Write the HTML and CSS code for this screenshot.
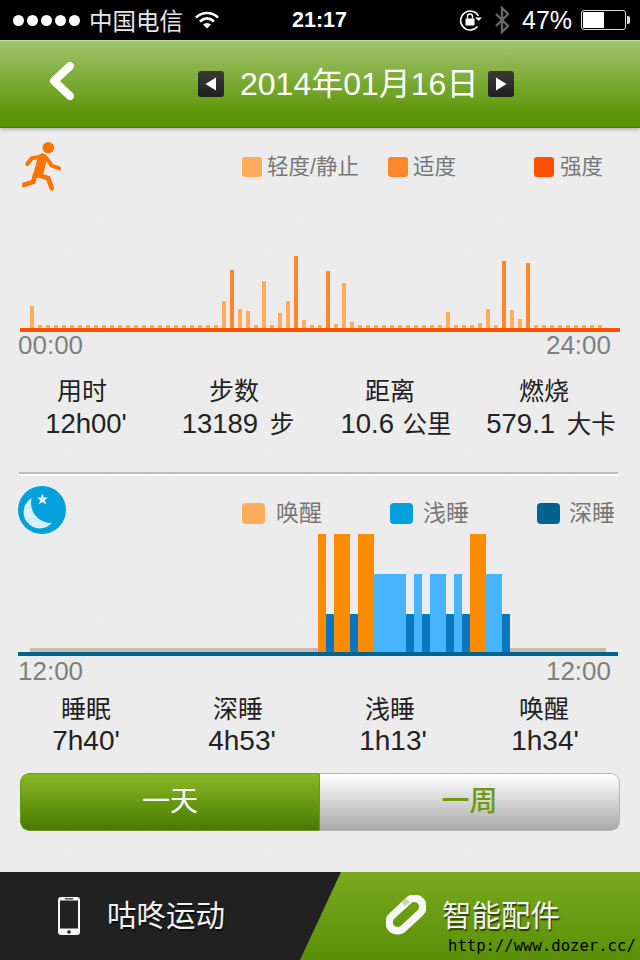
FILE: index.html
```html
<!DOCTYPE html>
<html lang="zh">
<head>
<meta charset="utf-8">
<title>咕咚运动</title>
<link rel="stylesheet" href="styles.css">
</head>
<body>
<div class="phone">
  <div class="status">
    <div class="dots"><i></i><i></i><i></i><i></i><i></i></div>
    <span class="carrier">中国电信</span>
    <svg class="wifi" viewBox="0 0 24 18"><path d="M1 6.5C7.5 .5 16.5 .5 23 6.5" fill="none" stroke="#fff" stroke-width="2.6"/><path d="M5 10.5C9.5 6.5 14.5 6.5 19 10.5" fill="none" stroke="#fff" stroke-width="2.6"/><path d="M12 17.5L8 13.5C10.5 11.5 13.5 11.5 16 13.5Z" fill="#fff"/></svg>
    <span class="clock">21:17</span>
    <svg class="lock" viewBox="0 0 24 22"><path d="M18.5 17.5A9.5 9.5 0 1 1 19.5 7" fill="none" stroke="#fff" stroke-width="1.5"/><path d="M16 8.5h7l-3.5 3.5z" fill="#fff"/><rect x="6.5" y="9.5" width="9" height="7" rx="1" fill="#fff"/><path d="M8.5 9.5V7.5a2.5 2.5 0 0 1 5 0v2" fill="none" stroke="#fff" stroke-width="1.4"/></svg>
    <svg class="bt" viewBox="0 0 16 28"><path d="M2 8L14 20L8 26V2L14 8L2 20" fill="none" stroke="#666" stroke-width="2.4"/></svg>
    <span class="pct">47%</span>
    <div class="battery"><div class="charge"></div></div>
    <div class="nub"></div>
  </div>

  <header class="topbar">
    <svg class="back" viewBox="0 0 28 44"><path d="M22 6L6 21L22 36" fill="none" stroke="#fff" stroke-width="8" stroke-linecap="round" stroke-linejoin="round"/></svg>
    <div class="datenav">
      <div class="arrow"><svg viewBox="0 0 26 26"><path d="M18 6.5V19.5L7.5 13Z" fill="#fff"/></svg></div>
      <span class="date">2014年01月16日</span>
      <div class="arrow"><svg viewBox="0 0 26 26"><path d="M8 6.5V19.5L18.5 13Z" fill="#fff"/></svg></div>
    </div>
  </header>

  <main class="content">
    <section class="activity">
      <div class="head">
        <svg class="runner" viewBox="0 0 40 50"><circle cx="26.3" cy="6.7" r="5.8" fill="#ff7300"/><g fill="none" stroke="#ff7300" stroke-linecap="round" stroke-linejoin="round"><path d="M20.5 17L16.5 32" stroke-width="9.5"/><path d="M19.7 15.7L9.7 17.3L5.3 23" stroke-width="4.2"/><path d="M24.7 17.3L29.7 24.7L37.3 27.3" stroke-width="4"/><path d="M16.3 34L26.3 37.3L29.7 47.3" stroke-width="4.8"/><path d="M13 34L11.3 40.7L1.8 44" stroke-width="4.8"/></g></svg>
        <div class="legend run-legend">
          <div class="key k1"><i class="sw c-light"></i><span>轻度/静止</span></div>
          <div class="key k2"><i class="sw c-mid"></i><span>适度</span></div>
          <div class="key k3"><i class="sw c-hard"></i><span>强度</span></div>
        </div>
      </div>
      <div class="bars" id="bars"></div>
      <div class="axis axis-run"></div>
      <div class="times"><span>00:00</span><span>24:00</span></div>
      <div class="stats run-stats">
        <div class="stat s1"><b>用时</b><em>12h00'</em></div>
        <div class="stat s2"><b>步数</b><em>13189 <small>步</small></em></div>
        <div class="stat s3"><b>距离</b><em>10.6 <small>公里</small></em></div>
        <div class="stat s4"><b>燃烧</b><em>579.1 <small>大卡</small></em></div>
      </div>
    </section>

    <div class="divider"></div>

    <section class="sleep">
      <div class="head sleep-head">
        <svg class="moon" viewBox="0 0 48 48"><circle cx="24" cy="24" r="24" fill="#00a0dc"/><path d="M13.7 12A16.3 16.3 0 1 0 34 37A20 20 0 0 1 13.7 12Z" fill="#d6eff9"/><path d="M24.3 7.5L25.9 11.5L30 11.5L26.8 14.3L28.3 18.5L24.5 16L20.8 18.3L22.3 14.2L19 11.5L23 11.5Z" fill="#e8f6fc"/></svg>
        <div class="legend sleep-legend">
          <div class="key k4"><i class="sw big c-light"></i><span>唤醒</span></div>
          <div class="key k5"><i class="sw big c-shallow"></i><span>浅睡</span></div>
          <div class="key k6"><i class="sw big c-deep"></i><span>深睡</span></div>
        </div>
      </div>
      <div class="plot">
        <div class="seg wake" style="width:8px"></div>
        <div class="seg deep" style="width:8px"></div>
        <div class="seg wake" style="width:16px"></div>
        <div class="seg deep" style="width:8px"></div>
        <div class="seg wake" style="width:16px"></div>
        <div class="seg light" style="width:32px"></div>
        <div class="seg deep" style="width:8px"></div>
        <div class="seg light" style="width:8px"></div>
        <div class="seg deep" style="width:8px"></div>
        <div class="seg light" style="width:16px"></div>
        <div class="seg deep" style="width:8px"></div>
        <div class="seg light" style="width:8px"></div>
        <div class="seg deep" style="width:8px"></div>
        <div class="seg wake" style="width:16px"></div>
        <div class="seg light" style="width:16px"></div>
        <div class="seg deep" style="width:8px"></div>
      </div>
      <div class="axis axis-sleep"></div>
      <div class="times sleep-times"><span>12:00</span><span>12:00</span></div>
      <div class="stats sleep-stats">
        <div class="stat t1"><b>睡眠</b><em>7h40'</em></div>
        <div class="stat t2"><b>深睡</b><em>4h53'</em></div>
        <div class="stat t3"><b>浅睡</b><em>1h13'</em></div>
        <div class="stat t4"><b>唤醒</b><em>1h34'</em></div>
      </div>
    </section>

    <div class="toggle">
      <div class="opt on">一天</div>
      <div class="opt off">一周</div>
    </div>
  </main>

  <footer class="tabs">
    <div class="tab tab-left">
      <svg class="phoneicon" viewBox="0 0 24 40"><rect x="1" y="1" width="22" height="38" rx="3" fill="#f4f4f4"/><rect x="3" y="4.5" width="18" height="28" fill="#222"/><rect x="8" y="2" width="8" height="1.5" fill="#555"/><circle cx="12" cy="36" r="1.8" fill="#222"/></svg>
      <span>咕咚运动</span>
    </div>
    <div class="tab tab-right">
      <svg class="linkicon" viewBox="0 0 40 40"><rect x="0" y="11" width="40" height="17" rx="8.5" transform="rotate(-43 20 19.5)" fill="none" stroke="#f6f6f6" stroke-width="7.5"/><path d="M15 7l5-3.5 4 3.500-5 4z" fill="#c8d9a8"/></svg>
      <span>智能配件</span>
    </div>
    <span class="mark">http://www.dozer.cc/</span>
  </footer>
</div>
<script src="bars.js"></script>
</body>
</html>
```
FILE: bars.js
```js
var tall = {0:22,24:27,25:58,26:19,27:17,29:47,31:15,32:27,33:72,34:8,37:57,38:4,39:45,40:6,52:16,56:5,57:19,59:67,60:18,61:9,62:65};
var strong = [25,33,37,59,62];
var host = document.getElementById('bars');
for (var i = 0; i < 72; i++) {
  var b = document.createElement('div');
  b.className = strong.indexOf(i) >= 0 ? 'bar strong' : 'bar';
  b.style.height = (tall[i] || 3) + 'px';
  host.appendChild(b);
}
```
FILE: styles.css
```css
* { box-sizing: border-box; margin: 0; padding: 0; }
html, body { width: 640px; height: 960px; overflow: hidden; background: #ebebeb; }
body { font-family: "Liberation Sans", "Noto Sans CJK SC", sans-serif; color: #222; }
i, em, b, small { font-style: normal; font-weight: normal; }
.phone { width: 640px; height: 960px; display: flex; flex-direction: column; }

.status { height: 40px; background: #000; color: #fff; display: flex; align-items: center; flex: none; padding-left: 13px; }
.dots { display: flex; gap: 3px; }
.dots i { width: 11px; height: 11px; border-radius: 50%; background: #fff; }
.carrier { font-size: 23.5px; margin-left: 9px; color: #e6e6e6; width: 95px; white-space: nowrap; }
.wifi { width: 24px; height: 18px; margin-left: 11px; }
.clock { font-size: 21.5px; font-weight: bold; margin-left: 73px; width: 55px; }
.lock { width: 24px; height: 22px; margin-left: 112px; }
.bt { width: 16px; height: 28px; margin-left: 11px; }
.pct { font-size: 25px; margin-left: 12px; width: 51px; }
.battery { width: 45px; height: 20px; margin-left: 8px; border: 1.5px solid #ddd; border-radius: 3px; padding: 1px; }
.charge { width: 21px; height: 100%; background: #fff; }
.nub { width: 3px; height: 8px; background: #ddd; border-radius: 0 2px 2px 0; margin-left: 1px; }

.topbar { height: 88px; flex: none; position: relative; display: flex; align-items: center; background: linear-gradient(#a2c570 0, #95bb5a 15%, #5d9608 85%, #5a9306 97%, #4c7c08 100%); border-top: 1px solid #c9dcac; box-shadow: 0 2px 3px rgba(0,0,0,.22); z-index: 2; }
.back { width: 28px; height: 44px; margin: 0 0 5px 48px; flex: none; }
.datenav { display: flex; align-items: center; margin: 0 0 1px 122px; }
.arrow { width: 26px; height: 26px; border-radius: 3px; background: linear-gradient(#3b3b3b, #1f1f1f); display: flex; }
.arrow svg { width: 26px; height: 26px; }
.date { font-size: 32px; color: #fff; width: 236px; margin: 0 12px 0 16px; white-space: nowrap; line-height: 44px; }

.content { flex: 1; display: flex; flex-direction: column; background-color: #eeeeee; background-image: url("data:image/svg+xml,%3Csvg xmlns='http://www.w3.org/2000/svg' width='200' height='200'%3E%3Cfilter id='n'%3E%3CfeTurbulence type='fractalNoise' baseFrequency='.7' numOctaves='2'/%3E%3CfeColorMatrix values='0 0 0 0 .5 0 0 0 0 .5 0 0 0 0 .5 0 0 0 .09 0'/%3E%3C/filter%3E%3Crect width='200' height='200' filter='url(%23n)'/%3E%3C/svg%3E"); }

.head { display: flex; height: 100px; padding-top: 13px; align-items: flex-start; }
.runner { width: 40px; height: 50px; margin-left: 22px; flex: none; }
.legend { display: flex; }
.key { display: flex; align-items: center; font-size: 21.5px; color: #777; line-height: 22px; white-space: nowrap; }
.sw { display: block; width: 20px; height: 20px; border-radius: 3px; }
.sw.big { width: 23px; height: 21px; border-radius: 4px; }
.run-legend { margin: 15px 0 0 180px; }
.key span { margin-left: 5px; }
.k1 { width: 146px; }
.k2 { width: 146px; }
.k3 span { margin-left: 6px; }
.k4 { width: 148px; }
.k5 { width: 147px; }
.k4, .k5, .k6 { font-size: 23px; }
.k4 span { margin-left: 11px; }
.k5 span { margin-left: 10px; }
.k6 span { margin-left: 9px; }
.sleep-legend { margin: 16px 0 0 176px; }
.c-light { background: #ffad5c; }
.c-mid { background: #ff872b; }
.c-hard { background: #ff5000; }
.c-shallow { background: #00a0dc; }
.c-deep { background: #00648c; }

.bars { height: 100px; display: flex; align-items: flex-end; gap: 4px; padding-left: 30px; }
.bar { width: 4px; flex: none; background: #ffad5c; }
.bar.strong { background: #ff872b; }
.axis { height: 4px; }
.axis-run { margin: 0 20px; background: #ff5000; }
.axis-sleep { margin: 0 22px 0 18px; background: #00648c; }

.times { display: flex; justify-content: space-between; font-size: 26px; line-height: 26px; color: #808080; height: 26px; margin: 0 29px 0 18px; }
.stats { display: grid; text-align: center; }
.run-stats { margin-top: 17px; padding-left: 6px; grid-template-columns: 152px 152px 160px 148px; }
.stat b { display: block; font-size: 25px; line-height: 32px; }
.stat em { display: block; font-size: 27.5px; line-height: 32px; margin-top: 1px; white-space: nowrap; }
.stat small { font-size: 24.5px; margin-left: 4px; }
.s1 em { padding-left: 8px; }
.s2 em { padding-left: 8px; }
.s3 em { padding-left: 12px; }
.s3 small { margin-left: 1px; }
.s4 em { padding-left: 14px; }

.divider { height: 4px; margin: 31px 22px 0 19px; background: linear-gradient(#bbb 50%, #fff 50%); }

.sleep-head { height: 58px; padding-top: 10px; }
.moon { width: 48px; height: 48px; margin-left: 18px; flex: none; }
.plot { height: 118px; display: flex; align-items: flex-end; padding-left: 318px; background: linear-gradient(#cdb9aa, #cdb9aa) no-repeat 30px 100% / 576px 4px; }
.seg.wake { height: 118px; background: #ff8c00; }
.seg.light { height: 78px; background: #47b4ff; }
.seg.deep { height: 38px; background: #0a78be; }
.sleep-times { margin: 2px 29px 0 18px; }
.sleep-stats { margin-top: 9px; padding-left: 10px; grid-template-columns: 152px 152px 152px 156px; }
.sleep-stats .stat em { line-height: 30px; font-size: 28px; }
.t2 em { padding-left: 8px; }
.t3 em { padding-left: 6px; }
.t4 em { padding-left: 2px; }

.toggle { display: flex; height: 58px; margin: 17px 20px 0; border-radius: 9px; overflow: hidden; font-size: 28px; line-height: 56px; text-align: center; }
.opt { width: 300px; }
.on { color: #fff; background: linear-gradient(#8ab926, #477a00); border: 1px solid #6a9a1a; border-radius: 9px 0 0 9px; }
.off { color: #6f9a10; font-weight: 500; background: linear-gradient(#fff, #f2f2f2 15%, #aaa); border: 1px solid #b5b5b5; border-left: 0; border-radius: 0 9px 9px 0; }

.tabs { height: 88px; flex: none; display: flex; position: relative; background: #212121; font-size: 29.5px; color: #f2f2f2; text-shadow: 1px 2px 1px rgba(0,0,0,.6); overflow: hidden; }
.tab { display: flex; align-items: center; }
.tab span { margin-bottom: 6px; }
.tab-left { width: 300px; padding-left: 57px; }
.tab-right { width: 340px; padding-left: 86px; clip-path: polygon(41px 0, 100% 0, 100% 100%, 0 100%); background: linear-gradient(#7aa91f, #598f06); }
.phoneicon { width: 24px; height: 40px; margin-right: 26px; }
.linkicon { width: 40px; height: 40px; margin: 0 16px 2px 0; }
.mark { position: absolute; left: 448px; top: 62px; font-family: "DejaVu Sans Mono", monospace; font-size: 15.6px; line-height: 24px; color: #000; text-shadow: none; white-space: nowrap; }
```
